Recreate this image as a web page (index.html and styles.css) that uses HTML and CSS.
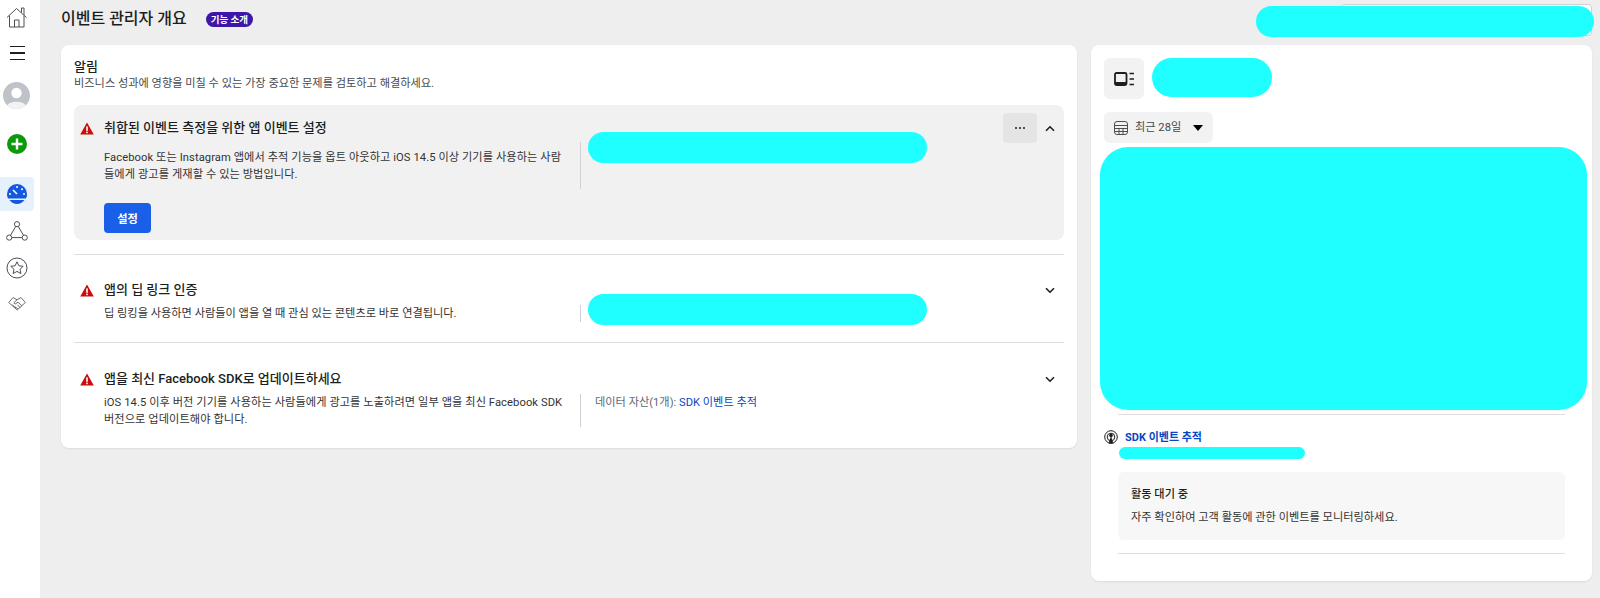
FILE: index.html
```html
<!DOCTYPE html>
<html lang="ko">
<head>
    <meta charset="UTF-8">
    <title>이벤트 관리자 개요</title>
    <link rel="stylesheet" href="styles.css">
</head>
<body>

<svg class="defs" width="0" height="0">
    <symbol id="warn" viewBox="0 0 14 13">
        <path d="M7 .5 L13.8 12.6 H.2 Z" fill="#c90c0c"/>
        <rect x="6.2" y="4.4" width="1.6" height="4.4" fill="#fff"/>
        <rect x="6.2" y="9.6" width="1.6" height="1.6" fill="#fff"/>
    </symbol>
    <symbol id="chev-down" viewBox="0 0 10 7">
        <path d="M1 1.2 L5 5.2 L9 1.2" fill="none" stroke="#1c1e21" stroke-width="1.6"/>
    </symbol>
    <symbol id="chev-up" viewBox="0 0 10 7">
        <path d="M1 5.8 L5 1.8 L9 5.8" fill="none" stroke="#1c1e21" stroke-width="1.6"/>
    </symbol>
</svg>

<div class="app">

    <!-- 왼쪽 메뉴 -->
    <nav class="sidebar">
        <div class="nav-item nav-home">
            <svg width="24" height="24" viewBox="0 0 24 24" fill="none" stroke="#4b4f56" stroke-width="1">
                <path d="M2 12.5 L11.5 3.5 L21.5 12.5"/>
                <path d="M16.5 7.5 V3 H19 V10"/>
                <path d="M4.5 10.5 V22 H19 V10.5"/>
                <path d="M9.5 22 V15 H14 V22"/>
            </svg>
        </div>
        <div class="nav-item nav-menu">
            <span class="bar"></span><span class="bar"></span><span class="bar"></span>
        </div>
        <div class="avatar">
            <svg width="27" height="27" viewBox="0 0 27 27">
                <circle cx="13.5" cy="13.5" r="13.5" fill="#bec2c9"/>
                <circle cx="13.5" cy="11" r="5.2" fill="#fff"/>
                <path d="M4.5 23.5 C6 18.5 21 18.5 22.5 23.5 C18 28 9 28 4.5 23.5 Z" fill="#f2f3f5"/>
            </svg>
        </div>
        <div class="add-btn">
            <svg width="20" height="20" viewBox="0 0 20 20">
                <circle cx="10" cy="10" r="10" fill="#0b9a0b"/>
                <path d="M10 4.5 V15.5 M4.5 10 H15.5" stroke="#fff" stroke-width="2.4"/>
            </svg>
        </div>
        <div class="nav-item nav-active">
            <svg width="20" height="20" viewBox="0 0 20 20">
                <path d="M0 10 A10 10 0 0 1 20 10 C20 12 19.5 13.5 18.8 14.5 H1.2 C.5 13.5 0 12 0 10 Z" fill="#1458e0"/>
                <path d="M2.5 16 H17.5 C15.5 18.7 12.9 20 10 20 C7.1 20 4.5 18.7 2.5 16 Z" fill="#1458e0"/>
                <path d="M6 6 L10 10" stroke="#fff" stroke-width="1.6"/>
                <circle cx="10" cy="3" r="1" fill="#fff"/>
                <circle cx="15" cy="5.2" r="1" fill="#fff"/>
                <circle cx="17" cy="10" r="1" fill="#fff"/>
                <circle cx="3" cy="10" r="1" fill="#fff"/>
            </svg>
        </div>
        <div class="nav-item nav-plain">
            <svg width="22" height="20" viewBox="0 0 22 20" fill="none" stroke="#4b4f56" stroke-width="1">
                <circle cx="11" cy="3.2" r="2.6"/>
                <circle cx="3.2" cy="16.6" r="2.6"/>
                <circle cx="18.8" cy="16.6" r="2.6"/>
                <path d="M9.7 5.5 L4.5 14.3 M12.3 5.5 L17.5 14.3 M5.8 16.6 H16.2"/>
            </svg>
        </div>
        <div class="nav-item nav-plain">
            <svg width="22" height="22" viewBox="0 0 22 22" fill="none" stroke="#4b4f56" stroke-width="1">
                <circle cx="11" cy="11" r="10"/>
                <path d="M11 4.8 L12.9 8.8 L17.2 9.3 L14 12.3 L14.9 16.6 L11 14.4 L7.1 16.6 L8 12.3 L4.8 9.3 L9.1 8.8 Z"/>
            </svg>
        </div>
        <div class="nav-item nav-shake">
            <svg width="18" height="15" viewBox="0 0 18 15" fill="none" stroke="#6a6e75" stroke-width="1">
                <path d="M.7 6.5 L5 1.5 L9 3.8 L13 1.5 L17.3 6.5 L9.2 14 Z"/>
                <path d="M9 3.8 L5.8 6.8 L7.2 8 L10 6.2 L14.2 10"/>
                <path d="M4.5 8.8 L8 12.2 M7 10.8 L10 13 M9.5 8.8 L12.3 11.8"/>
            </svg>
        </div>
    </nav>

    <div class="main">

        <header class="page-head">
            <h1 class="page-title">이벤트 관리자 개요</h1>
            <span class="badge">기능 소개</span>
            <div class="search-box"></div>
            <div class="mask mask-top"></div>
        </header>

        <div class="columns">

            <!-- 알림 -->
            <section class="card card-alerts">
                <h2 class="card-title">알림</h2>
                <p class="card-sub">비즈니스 성과에 영향을 미칠 수 있는 가장 중요한 문제를 검토하고 해결하세요.</p>

                <div class="alert alert-open">
                    <div class="alert-head">
                        <svg class="warn"><use href="#warn"/></svg>
                        <h3 class="alert-title">취합된 이벤트 측정을 위한 앱 이벤트 설정</h3>
                        <div class="more-btn"><span></span><span></span><span></span></div>
                        <svg class="chev"><use href="#chev-up"/></svg>
                    </div>
                    <div class="alert-body body-tall">
                        <p class="alert-desc desc-wide">Facebook 또는 Instagram 앱에서 추적 기능을 옵트 아웃하고 iOS 14.5 이상 기기를 사용하는 사람들에게 광고를 게재할 수 있는 방법입니다.</p>
                        <div class="alert-aside"><div class="mask mask-bar"></div></div>
                    </div>
                    <button class="btn-primary">설정</button>
                </div>

                <div class="alert alert-line">
                    <div class="alert-head">
                        <svg class="warn"><use href="#warn"/></svg>
                        <h3 class="alert-title">앱의 딥 링크 인증</h3>
                        <svg class="chev"><use href="#chev-down"/></svg>
                    </div>
                    <div class="alert-body">
                        <p class="alert-desc">딥 링킹을 사용하면 사람들이 앱을 열 때 관심 있는 콘텐츠로 바로 연결됩니다.</p>
                        <div class="alert-aside"><div class="mask mask-bar"></div></div>
                    </div>
                </div>

                <div class="alert alert-last">
                    <div class="alert-head">
                        <svg class="warn"><use href="#warn"/></svg>
                        <h3 class="alert-title">앱을 최신 Facebook SDK로 업데이트하세요</h3>
                        <svg class="chev"><use href="#chev-down"/></svg>
                    </div>
                    <div class="alert-body">
                        <p class="alert-desc desc-wide">iOS 14.5 이후 버전 기기를 사용하는 사람들에게 광고를 노출하려면 일부 앱을 최신 Facebook SDK 버전으로 업데이트해야 합니다.</p>
                        <div class="alert-aside aside-text">데이터 자산(1개): <a class="link" href="#">SDK 이벤트 추적</a></div>
                    </div>
                </div>
            </section>

            <!-- 오른쪽 패널 -->
            <aside class="card card-side">
                <div class="side-head">
                    <div class="tile">
                        <svg width="21" height="14" viewBox="0 0 21 14">
                            <rect x="1" y="1" width="11.5" height="12" rx="1.5" fill="none" stroke="#1c1e21" stroke-width="1.8"/>
                            <rect x="1" y="10" width="11.5" height="3" fill="#1c1e21"/>
                            <path d="M15.5 1.5 H20 M15.5 7 H20 M15.5 12.5 H20" stroke="#1c1e21" stroke-width="1.4"/>
                        </svg>
                    </div>
                    <div class="mask mask-name"></div>
                </div>

                <div class="date-btn">
                    <svg width="14" height="14" viewBox="0 0 14 14" fill="none" stroke="#4b4f56" stroke-width="1">
                        <rect x=".5" y=".5" width="13" height="13" rx="2.5"/>
                        <path d="M.5 4.5 H13.5 M.5 7.5 H13.5 M.5 10.5 H13.5 M5 7.5 V13.5 M9 7.5 V13.5"/>
                    </svg>
                    <span class="date-label">최근 28일</span>
                    <span class="caret"></span>
                </div>

                <div class="mask mask-big"></div>

                <div class="side-rule"></div>

                <div class="source-row">
                    <svg width="14" height="14" viewBox="0 0 14 14" fill="none" stroke="#1c1e21" stroke-width="1">
                        <circle cx="7" cy="7" r="6.3"/>
                        <circle cx="7" cy="7" r="3.8"/>
                        <circle cx="7" cy="5.5" r="1.4" fill="#1c1e21"/>
                        <path d="M7 6 L4.6 13.4 H9.4 Z" fill="#1c1e21" stroke="none"/>
                    </svg>
                    <a class="source-link" href="#">SDK 이벤트 추적</a>
                </div>
                <div class="mask mask-small"></div>

                <div class="status-box">
                    <h4 class="status-title">활동 대기 중</h4>
                    <p class="status-text">자주 확인하여 고객 활동에 관한 이벤트를 모니터링하세요.</p>
                </div>

                <div class="side-rule"></div>
            </aside>

        </div>
    </div>
</div>

</body>
</html>
```

FILE: styles.css
```css
* {
    box-sizing: border-box;
}

html, body {
    margin: 0;
    height: 100%;
}

body {
    background: #eeeeee;
    color: #1c1e21;
    font-family: Roboto, "Noto Sans CJK KR", "Liberation Sans", sans-serif;
    font-size: 11.2px;
    line-height: 17px;
    overflow: hidden;
}

h1, h2, h3, h4, p {
    margin: 0;
}

.defs {
    position: absolute;
}

.app {
    display: flex;
    height: 598px;
}

/* sidebar */

.sidebar {
    width: 40px;
    flex-shrink: 0;
    background: #fff;
    padding-top: 5px;
}

.nav-item {
    width: 34px;
    display: flex;
    align-items: center;
    justify-content: center;
}

.nav-home {
    height: 24px;
}

.nav-menu {
    flex-direction: column;
    gap: 5px;
    height: 14px;
    margin-top: 17px;
}

.bar {
    display: block;
    width: 15px;
    height: 1.5px;
    background: #1c1e21;
}

.avatar {
    width: 27px;
    height: 27px;
    margin: 22px 0 0 3px;
}

.add-btn {
    width: 20px;
    height: 20px;
    margin: 25px 0 0 7px;
}

.nav-active {
    height: 34px;
    margin-top: 23px;
    background: #e7f0fd;
    border-radius: 0 4px 4px 0;
}

.nav-plain {
    height: 37px;
}

.nav-shake {
    height: 35px;
}

.nav-active + .nav-plain {
    margin-top: 1px;
}

/* main */

.main {
    flex: 1;
    padding: 0 8px 0 21px;
}

.page-head {
    position: relative;
    display: flex;
    align-items: center;
    height: 45px;
    padding-bottom: 7px;
}

.page-title {
    font-size: 16px;
    font-weight: 500;
    line-height: 24px;
}

.badge {
    margin-left: 19px;
    padding: 0 5px;
    height: 15px;
    line-height: 15px;
    border-radius: 8px;
    background: #3f17a8;
    color: #fff;
    font-size: 9.5px;
    font-weight: 700;
}

.search-box {
    position: absolute;
    top: 4px;
    right: 0;
    width: 252px;
    height: 32px;
    background: #fff;
    border: 1px solid #ccd0d5;
    border-radius: 4px;
}

.mask {
    background: #1fffff;
}

.mask-top {
    position: absolute;
    top: 6px;
    right: -2px;
    width: 338px;
    height: 31px;
    border-radius: 16px;
}

.columns {
    display: flex;
    align-items: flex-start;
    gap: 14px;
}

.card {
    background: #fff;
    border-radius: 8px;
    box-shadow: 0 1px 2px rgba(0, 0, 0, 0.08);
}

/* alerts card */

.card-alerts {
    width: 1016px;
    height: 403px;
    padding: 13px 13px 0;
}

.card-title {
    font-size: 13px;
    font-weight: 500;
    line-height: 17px;
}

.card-sub {
    line-height: 17px;
    color: #444950;
    margin-bottom: 13px;
}

.alert {
    padding: 14px 9px 7px 6px;
}

.alert-open {
    height: 135px;
    background: #f1f1f1;
    border-radius: 8px;
}

.alert-line {
    margin-top: 14px;
    padding-top: 26px;
    padding-bottom: 20px;
    border-top: 1px solid #dddfe2;
    border-bottom: 1px solid #dddfe2;
}

.alert-last {
    padding-top: 27px;
}

.alert-head {
    display: flex;
    align-items: center;
    height: 18px;
}

.warn {
    width: 14px;
    height: 13px;
    margin-right: 10px;
    flex-shrink: 0;
}

.alert-title {
    font-size: 13px;
    font-weight: 500;
    line-height: 18px;
}

.more-btn {
    margin-left: auto;
    width: 34px;
    height: 30px;
    display: flex;
    align-items: center;
    justify-content: center;
    gap: 1.5px;
    background: #e4e4e4;
    border-radius: 4px;
}

.more-btn span {
    width: 2.5px;
    height: 2.5px;
    border-radius: 50%;
    background: #1c1e21;
}

.chev {
    width: 10px;
    height: 7px;
    margin-left: auto;
}

.more-btn + .chev {
    margin-left: 8px;
}

.alert-body {
    display: flex;
    margin: 6px 0 0 24px;
}

.body-tall {
    height: 47px;
    margin-top: 5px;
}

.body-tall .alert-desc {
    padding-top: 7px;
}

.body-tall .mask-bar {
    top: -10px;
}

.alert-desc {
    width: 476px;
    padding-right: 13px;
    color: #333;
    line-height: 17px;
    word-break: break-all;
}

.desc-wide {
    letter-spacing: 0.08px;
}

.alert-aside {
    position: relative;
    border-left: 1px solid #cfd1d4;
    padding-left: 14px;
    color: #606770;
    flex: 1;
}

.mask-bar {
    position: absolute;
    left: 7px;
    top: -11px;
    width: 339px;
    height: 31px;
    border-radius: 16px;
}

.aside-text {
    height: 33px;
}

.link {
    color: #0a45c2;
    text-decoration: none;
}

.btn-primary {
    display: block;
    width: 47px;
    height: 30px;
    margin: 14px 0 0 24px;
    padding: 0;
    border: none;
    border-radius: 4px;
    background: #1a5fe8;
    color: #fff;
    font-family: inherit;
    font-size: 11.2px;
    font-weight: 700;
}

/* right panel */

.card-side {
    width: 501px;
    height: 536px;
    padding: 13px 5px 0 13px;
}

.side-head {
    display: flex;
    gap: 8px;
}

.tile {
    width: 40px;
    height: 41px;
    display: flex;
    align-items: center;
    justify-content: center;
    background: #f2f2f2;
    border-radius: 6px;
}

.mask-name {
    width: 120px;
    height: 39px;
    border-radius: 20px;
}

.date-btn {
    display: flex;
    align-items: center;
    width: 109px;
    height: 31px;
    margin-top: 13px;
    padding-left: 10px;
    background: #f2f2f2;
    border-radius: 6px;
}

.date-label {
    margin-left: 7px;
    color: #444950;
}

.caret {
    margin-left: 12px;
    border-left: 5px solid transparent;
    border-right: 5px solid transparent;
    border-top: 6px solid #000;
}

.mask-big {
    width: 487px;
    height: 263px;
    margin: 4px 0 0 -4px;
    border-radius: 28px;
}

.side-rule {
    height: 1px;
    width: 447px;
    margin-left: 14px;
    background: #dddfe2;
}

.mask-big + .side-rule {
    margin-top: 4px;
}

.source-row {
    display: flex;
    align-items: center;
    gap: 7px;
    height: 18px;
    margin-top: 13px;
}

.source-link {
    color: #0a45c2;
    font-size: 11px;
    font-weight: 700;
    text-decoration: none;
}

.mask-small {
    width: 186px;
    height: 12px;
    margin: 1px 0 0 15px;
    border-radius: 6px;
}

.status-box {
    width: 447px;
    height: 68px;
    margin: 13px 0 13px 14px;
    padding: 14px 13px;
    background: #f7f7f7;
    border-radius: 6px;
}

.status-title {
    font-size: 11.2px;
    font-weight: 500;
    line-height: 17px;
    margin-bottom: 6px;
}

.status-text {
    color: #333;
    line-height: 17px;
}
```
